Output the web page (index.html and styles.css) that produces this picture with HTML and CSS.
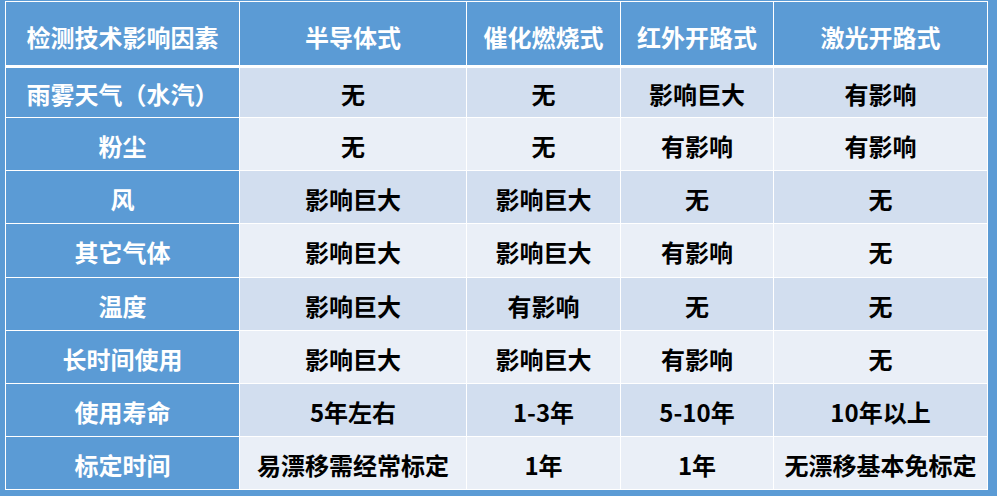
FILE: index.html
```html
<!DOCTYPE html>
<html lang="zh-CN">
<head>
<meta charset="utf-8">
<title>检测技术影响因素</title>
<link rel="stylesheet" href="styles.css">
</head>
<body>
<div class="table">
  <div class="cell head">检测技术影响因素</div>
  <div class="cell head">半导体式</div>
  <div class="cell head">催化燃烧式</div>
  <div class="cell head">红外开路式</div>
  <div class="cell head">激光开路式</div>

  <div class="cell side">雨雾天气（水汽）</div>
  <div class="cell odd">无</div>
  <div class="cell odd">无</div>
  <div class="cell odd">影响巨大</div>
  <div class="cell odd">有影响</div>

  <div class="cell side">粉尘</div>
  <div class="cell even">无</div>
  <div class="cell even">无</div>
  <div class="cell even">有影响</div>
  <div class="cell even">有影响</div>

  <div class="cell side">风</div>
  <div class="cell odd">影响巨大</div>
  <div class="cell odd">影响巨大</div>
  <div class="cell odd">无</div>
  <div class="cell odd">无</div>

  <div class="cell side">其它气体</div>
  <div class="cell even">影响巨大</div>
  <div class="cell even">影响巨大</div>
  <div class="cell even">有影响</div>
  <div class="cell even">无</div>

  <div class="cell side">温度</div>
  <div class="cell odd">影响巨大</div>
  <div class="cell odd">有影响</div>
  <div class="cell odd">无</div>
  <div class="cell odd">无</div>

  <div class="cell side">长时间使用</div>
  <div class="cell even">影响巨大</div>
  <div class="cell even">影响巨大</div>
  <div class="cell even">有影响</div>
  <div class="cell even">无</div>

  <div class="cell side">使用寿命</div>
  <div class="cell odd">5年左右</div>
  <div class="cell odd">1-3年</div>
  <div class="cell odd">5-10年</div>
  <div class="cell odd">10年以上</div>

  <div class="cell side">标定时间</div>
  <div class="cell even">易漂移需经常标定</div>
  <div class="cell even">1年</div>
  <div class="cell even">1年</div>
  <div class="cell even">无漂移基本免标定</div>
</div>
</body>
</html>
```
FILE: styles.css
```css
html, body {
  margin: 0;
  padding: 0;
  background: #5b9bd5;
}
body {
  width: 997px;
  height: 496px;
  overflow: hidden;
  font-family: "Noto Sans CJK SC", "Microsoft YaHei", sans-serif;
  font-weight: 700;
  font-size: 24px;
}
.table {
  display: grid;
  grid-template-columns: 233px 226px 153px 152px 213px;
  grid-template-rows: 65px 49px 52px 52px 53px 52px 52px 52px 52px;
  gap: 1px;
  padding: 1px;
  background: #ffffff;
  width: max-content;
  margin: 1px 0 0 5px;
}
.cell {
  display: flex;
  align-items: center;
  justify-content: center;
  padding-top: 2px;
  box-sizing: border-box;
  white-space: nowrap;
  color: #000;
}
.head {
  background: #5b9bd5;
  color: #fff;
  margin-bottom: 2px;
  padding-top: 6px;
}
.side {
  background: #5b9bd5;
  color: #fff;
}
.odd {
  background: #d2deef;
}
.even {
  background: #eaeff7;
}
```
